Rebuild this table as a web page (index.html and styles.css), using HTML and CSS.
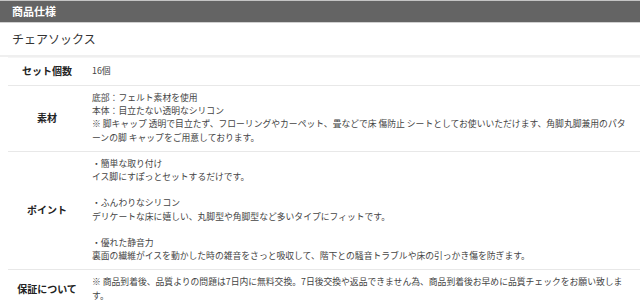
FILE: index.html
```html
<!DOCTYPE html>
<html lang="ja">
<head>
<meta charset="utf-8">
<link rel="stylesheet" href="styles.css">
</head>
<body>
<div class="spec">
  <div class="spec-head">商品仕様</div>
  <div class="spec-title">チェアソックス</div>
  <table class="spec-table">
    <tr>
      <th>セット個数</th>
      <td>16個</td>
    </tr>
    <tr>
      <th>素材</th>
      <td>底部：フェルト素材を使用<br>本体：目立たない透明なシリコン<br>※ 脚キャップ 透明で目立たず、フローリングやカーペット、畳などで床 傷防止 シートとしてお使いいただけます、角脚丸脚兼用のパターンの脚 キャップをご用意しております。</td>
    </tr>
    <tr>
      <th>ポイント</th>
      <td>・簡単な取り付け<br>イス脚にすぽっとセットするだけです。<br><br>・ふんわりなシリコン<br>デリケートな床に嬉しい、丸脚型や角脚型など多いタイプにフィットです。<br><br>・優れた静音力<br>裏面の繊維がイスを動かした時の雑音をさっと吸収して、階下との騒音トラブルや床の引っかき傷を防ぎます。</td>
    </tr>
    <tr>
      <th>保証について</th>
      <td>※ 商品到着後、品質よりの問題は7日内に無料交換。7日後交換や返品できません為、商品到着後お早めに品質チェックをお願い致します。</td>
    </tr>
  </table>
</div>
</body>
</html>
```
FILE: styles.css
```css
html, body {
  margin: 0;
  padding: 0;
  background: #ffffff;
}
body {
  font-family: "Noto Sans CJK JP", "Noto Sans", sans-serif;
  color: #444;
}
.spec-head {
  border-top: 1px solid #c4c4c4;
  border-bottom: 1px solid #d0d0d0;
  background: #646464;
  color: #fff;
  font-size: 11px;
  font-weight: bold;
  height: 21px;
  line-height: 21px;
  padding-left: 12px;
}
.spec-title {
  font-size: 12px;
  color: #333;
  height: 32px;
  line-height: 32px;
  padding-left: 12px;
  border-bottom: 2px solid #efefef;
}
.spec-table {
  margin: 0 0 0 8px;
  width: calc(100% - 8px);
  border-collapse: collapse;
  border-top: 1px solid #f5f5f5;
}
.spec-table th,
.spec-table td {
  border-bottom: 1px solid #e8e8e8;
  padding: 5px 0 7px;
  vertical-align: middle;
}
.spec-table th {
  width: 78px;
  font-size: 10px;
  font-weight: bold;
  color: #222;
  text-align: center;
  white-space: nowrap;
}
.spec-table td {
  padding-left: 6px;
  padding-right: 10px;
  font-size: 8.8px;
  line-height: 13.2px;
  color: #444;
}
```
